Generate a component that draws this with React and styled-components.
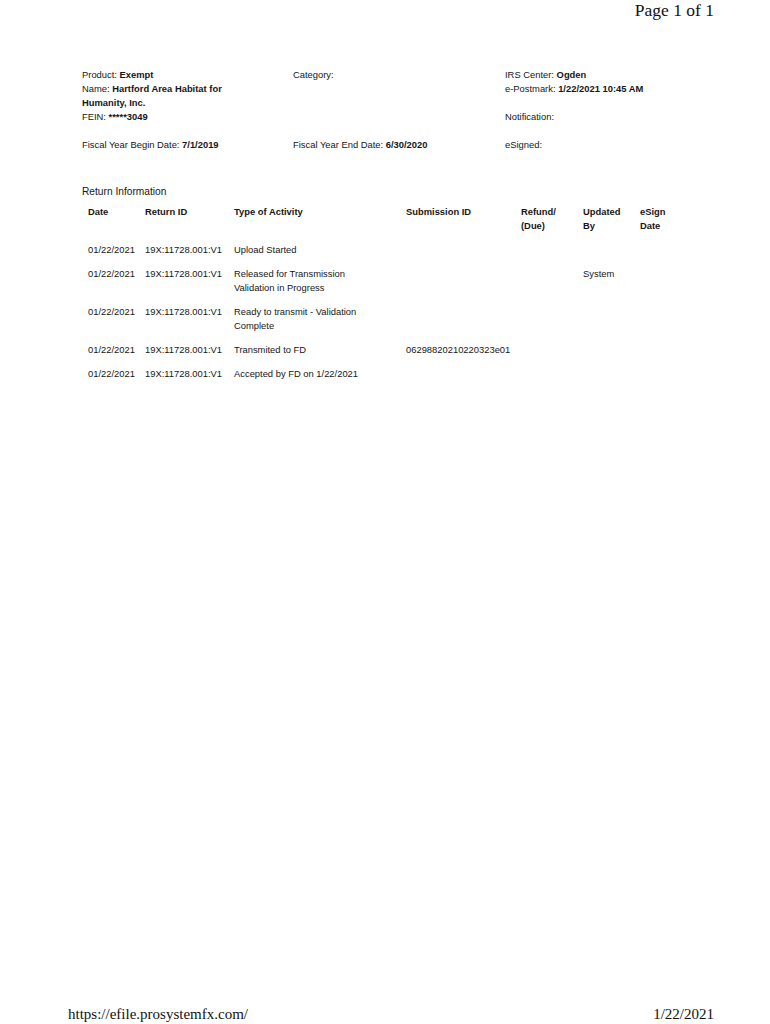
import React from 'react';
import styled, { createGlobalStyle } from 'styled-components';

const GlobalStyle = createGlobalStyle`
	html, body {
		margin: 0;
		padding: 0;
		background: #fff;
	}
	* {
		box-sizing: border-box;
	}
`;

const Page = styled.div`
	width: 770px;
	min-height: 1024px;
	display: flex;
	flex-direction: column;
	padding: 0 56px 2px 68px;
	color: #161616;
	font-family: 'Liberation Sans', Arial, sans-serif;
	font-size: 9.4px;
	line-height: 14px;
`;

const PageNumber = styled.div`
	align-self: flex-end;
	font-family: 'Liberation Serif', 'Times New Roman', serif;
	font-size: 17.5px;
	line-height: 20px;
	color: #111;
`;

const Header = styled.div`
	display: grid;
	grid-template-columns: 211px 212px 1fr;
	row-gap: 14px;
	margin: 48px 0 0 14px;
`;

const Cell = styled.div`
	display: flex;
	flex-direction: column;
`;

const Line = styled.div`
	min-height: 14px;
	white-space: nowrap;
`;

const Section = styled.div`
	margin: 33px 0 0 14px;
`;

const Title = styled.div`
	font-size: 10.2px;
	line-height: 14px;
`;

const Table = styled.div`
	margin: 6px 0 0 6px;
	display: flex;
	flex-direction: column;
	gap: 10px;
`;

const Row = styled.div`
	display: grid;
	grid-template-columns: 57px 89px 172px 115px 62px 57px 1fr;
	font-weight: ${(p) => (p.$head ? 'bold' : 'normal')};
	white-space: nowrap;
`;

const Footer = styled.div`
	margin-top: auto;
	display: flex;
	justify-content: space-between;
	align-items: baseline;
	font-family: 'Liberation Serif', 'Times New Roman', serif;
	font-size: 15px;
	line-height: 16px;
	color: #111;
`;

const rows = [
	{ activity: ['Upload Started'] },
	{ activity: ['Released for Transmission', 'Validation in Progress'], by: 'System' },
	{ activity: ['Ready to transmit - Validation', 'Complete'] },
	{ activity: ['Transmited to FD'], submission: '06298820210220323e01' },
	{ activity: ['Accepted by FD on 1/22/2021'] },
];

const Lines = ({ items }) => (
	<div>
		{items.map((t) => (
			<Line key={t}>{t}</Line>
		))}
	</div>
);

export default function App() {
	return (
		<Page>
			<GlobalStyle />
			<PageNumber>Page 1 of 1</PageNumber>

			<Header>
				<Cell>
					<Line>
						Product: <b>Exempt</b>
					</Line>
					<Line>
						Name: <b>Hartford Area Habitat for</b>
					</Line>
					<Line>
						<b>Humanity, Inc.</b>
					</Line>
					<Line>
						FEIN: <b>*****3049</b>
					</Line>
				</Cell>
				<Cell>
					<Line>Category:</Line>
				</Cell>
				<Cell>
					<Line>
						IRS Center: <b>Ogden</b>
					</Line>
					<Line>
						e-Postmark: <b>1/22/2021 10:45 AM</b>
					</Line>
					<Line />
					<Line>Notification:</Line>
				</Cell>
				<Line>
					Fiscal Year Begin Date: <b>7/1/2019</b>
				</Line>
				<Line>
					Fiscal Year End Date: <b>6/30/2020</b>
				</Line>
				<Line>eSigned:</Line>
			</Header>

			<Section>
				<Title>Return Information</Title>
				<Table>
					<Row $head>
						<Lines items={['Date']} />
						<Lines items={['Return ID']} />
						<Lines items={['Type of Activity']} />
						<Lines items={['Submission ID']} />
						<Lines items={['Refund/', '(Due)']} />
						<Lines items={['Updated', 'By']} />
						<Lines items={['eSign', 'Date']} />
					</Row>
					{rows.map((r) => (
						<Row key={r.activity[0]}>
							<Line>01/22/2021</Line>
							<Line>19X:11728.001:V1</Line>
							<Lines items={r.activity} />
							<Line>{r.submission}</Line>
							<Line />
							<Line>{r.by}</Line>
							<Line />
						</Row>
					))}
				</Table>
			</Section>

			<Footer>
				<span>https://efile.prosystemfx.com/</span>
				<span>1/22/2021</span>
			</Footer>
		</Page>
	);
}
